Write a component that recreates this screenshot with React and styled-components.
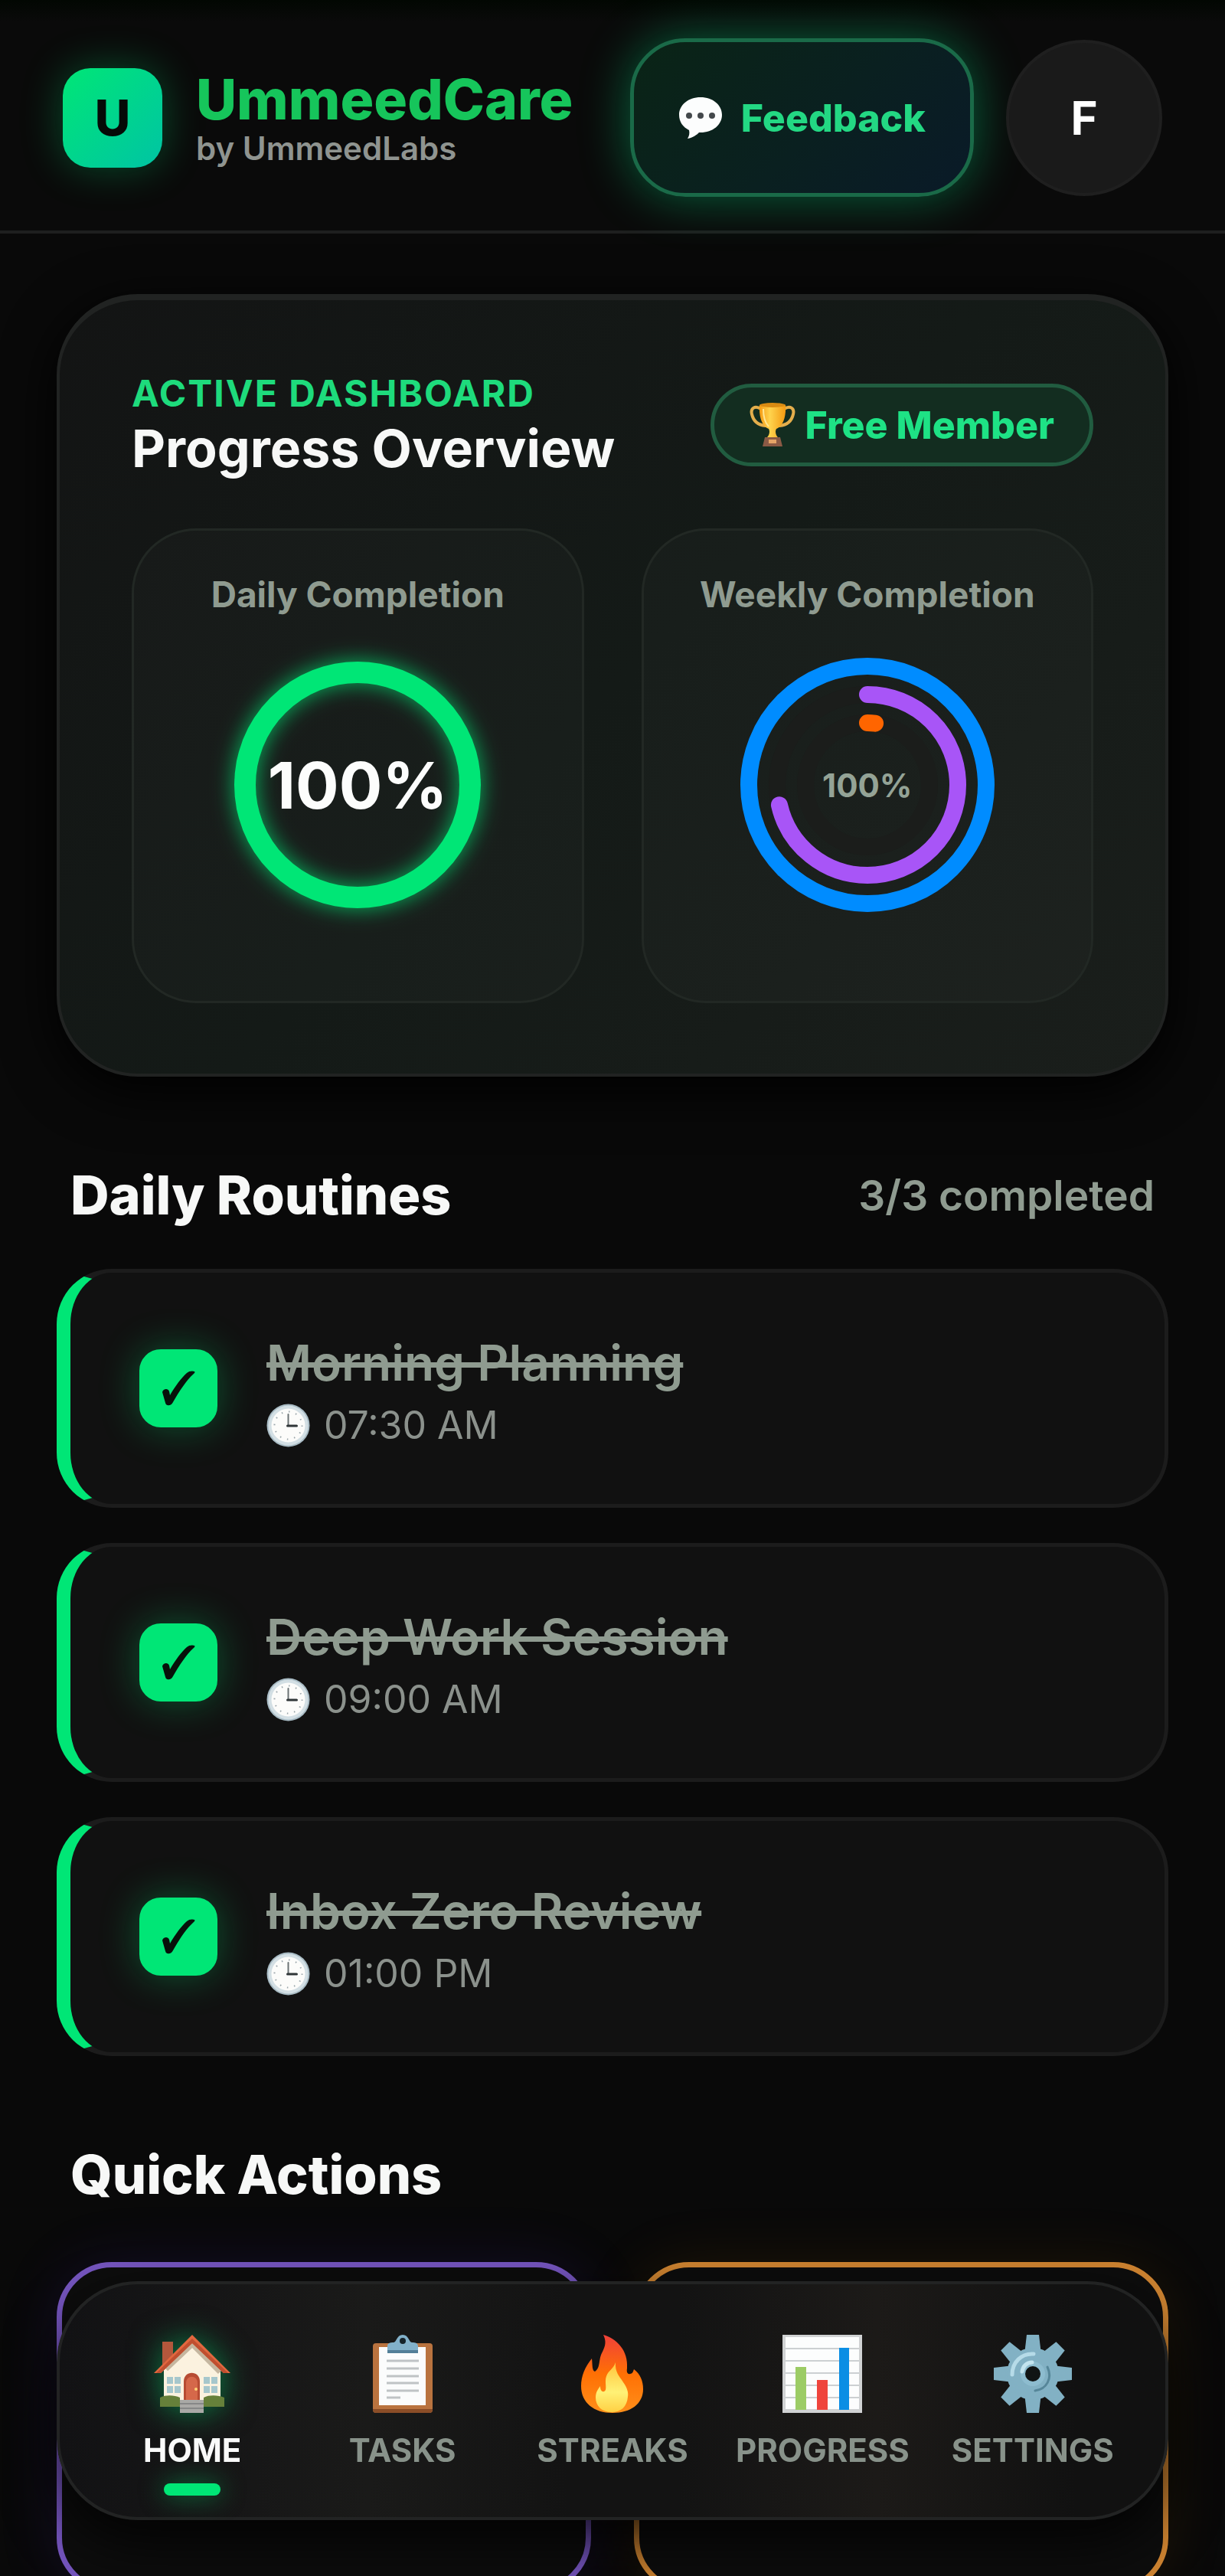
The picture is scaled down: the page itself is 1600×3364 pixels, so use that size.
import React, { useState } from "react";
import styled, { createGlobalStyle, css } from "styled-components";

const GlobalStyle = createGlobalStyle`
  *, *::before, *::after { box-sizing: border-box; }
  html, body { margin: 0; background: #090909; }
  body {
    font-family: Inter, "Liberation Sans", sans-serif;
    color: #f7f8f7;
    -webkit-font-smoothing: antialiased;
  }
  button, input { font: inherit; margin: 0; }
  h1, h2, h3, p, ul { margin: 0; padding: 0; }
  ul { list-style: none; }
`;

const green = "#00e676";
const muted = "#8f9b90";

const Shell = styled.div`
  display: flex;
  flex-direction: column;
  height: 100vh;
  overflow: hidden;
  background: #090909;
`;

/* ---------- header ---------- */

const Header = styled.header`
  display: flex;
  flex: none;
  align-items: center;
  justify-content: space-between;
  padding: 50px 82px 44px;
  border-bottom: 4px solid #1e1f1f;
  background: linear-gradient(#020702 0, #0a0a0a 28px);
`;

const Group = styled.div`
  display: flex;
  align-items: center;
  gap: ${(p) => p.$gap}px;
`;

const Logo = styled.div`
  display: grid;
  place-items: center;
  width: 130px;
  height: 130px;
  border-radius: 36px;
  background: linear-gradient(135deg, #00e676, #00c4a4);
  box-shadow: 0 0 54px rgba(0, 230, 118, 0.3);
  color: #050a07;
  font-size: 64px;
  font-weight: 800;
`;

const BrandName = styled.h1`
  font-size: 73px;
  line-height: 80px;
  font-weight: 800;
  color: #16c55b;
`;

const BrandBy = styled.p`
  font-size: 42px;
  line-height: 48px;
  font-weight: 600;
  color: #8f9490;
`;

const FeedbackButton = styled.button`
  display: flex;
  align-items: center;
  gap: 24px;
  min-height: 207px;
  padding: 0 58px;
  border: 5px solid #1a6a48;
  border-radius: 72px;
  background: linear-gradient(135deg, #0a2416, #0a2020 55%, #0a1a28);
  box-shadow: 0 0 64px rgba(0, 230, 138, 0.4);
  color: #23d883;
  font-size: 50px;
  font-weight: 800;
`;

const Avatar = styled.button`
  width: 204px;
  height: 204px;
  padding: 0;
  border: 4px solid #1f1f1f;
  border-radius: 50%;
  background: #1a1a1a;
  color: #fff;
  font-size: 60px;
  font-weight: 700;
`;

/* ---------- overview card ---------- */

const Main = styled.main`
  flex: 1;
  min-height: 0;
  padding: 79px 74px 0;
  overflow: hidden;
`;

const Overview = styled.section`
  padding: 92px 94px;
  border: 4px solid #212322;
  border-top-width: 8px;
  border-radius: 106px;
  background: linear-gradient(135deg, #131414, #141a17 50%, #1a1e1b);
  box-shadow: 0 18px 70px #000;
`;

const OverviewHead = styled.div`
  display: flex;
  align-items: center;
  justify-content: space-between;
  margin-bottom: 64px;
`;

const Eyebrow = styled.p`
  font-size: 48px;
  line-height: 60px;
  font-weight: 700;
  letter-spacing: 2px;
  color: #1edb7c;
`;

const Title = styled.h2`
  font-size: ${(p) => (p.$compact ? 68 : 70)}px;
  line-height: ${(p) => (p.$compact ? 82 : 90)}px;
  font-weight: ${(p) => (p.$compact ? 700 : 800)};
`;

const Badge = styled.span`
  display: flex;
  align-items: center;
  gap: 12px;
  height: 108px;
  padding: 0 46px;
  border: 5px solid #215c40;
  border-radius: 54px;
  background: #132d20;
  color: #1ee285;
  font-size: 50px;
  font-weight: 800;
`;

const Panels = styled.div`
  display: grid;
  grid-template-columns: 1fr 1fr;
  gap: 75px;
`;

const Panel = styled.article`
  display: flex;
  flex-direction: column;
  align-items: center;
  gap: 43px;
  padding: 55px 0 104px;
  border: 3px solid #222824;
  border-radius: 84px;
  background: rgba(255, 255, 255, 0.02);
`;

const PanelLabel = styled.h3`
  font-size: 46px;
  line-height: 56px;
  font-weight: 700;
  color: ${muted};
`;

const RingBox = styled.div`
  display: grid;
  place-items: center;
  > * { grid-area: 1 / 1; }
  svg { overflow: visible; }
`;

const RingValue = styled.span`
  font-size: ${(p) => (p.$big ? 84 : 42)}px;
  font-weight: 700;
  color: ${(p) => (p.$big ? "#fcfdfc" : "#94a396")};
`;

/* ---------- sections ---------- */

const SectionHead = styled.div`
  display: flex;
  align-items: center;
  justify-content: space-between;
  margin: 110px 18px ${(p) => p.$below}px;
`;

const Count = styled.span`
  font-size: 55px;
  line-height: 68px;
  font-weight: 600;
  color: ${muted};
`;

const RoutineList = styled.ul`
  display: flex;
  flex-direction: column;
  gap: 46px;
`;

const Routine = styled.li`
  display: flex;
  align-items: center;
  gap: 64px;
  min-height: 312px;
  padding: 0 90px;
  border: 5px solid #1c1c1c;
  border-left: 18px solid ${green};
  border-radius: 72px;
  background: #111;
`;

const CheckBox = styled.span`
  display: grid;
  place-items: center;
  > * { grid-area: 1 / 1; }
  svg { pointer-events: none; }
`;

const CheckInput = styled.input`
  appearance: none;
  width: 102px;
  height: 102px;
  border: 4px solid ${green};
  border-radius: 28px;
  &:checked {
    background: ${green};
    box-shadow: 0 0 52px rgba(0, 230, 118, 0.32);
  }
`;

const RoutineName = styled.label`
  display: block;
  font-size: 64px;
  line-height: 96px;
  font-weight: 600;
  color: ${muted};
  text-decoration: ${(p) => (p.$done ? "line-through" : "none")};
  text-decoration-thickness: 7px;
`;

const RoutineTime = styled.p`
  display: flex;
  align-items: center;
  gap: 18px;
  font-size: 50px;
  line-height: 66px;
  color: #8b918c;
`;

const ActionGrid = styled.div`
  display: grid;
  grid-template-columns: 1fr 1fr;
  gap: 56px;
`;

const ActionCard = styled.div`
  min-height: 432px;
  border: 7px solid ${(p) => p.$edge};
  border-radius: 72px;
  background: #0d0d0d;
  box-shadow: 0 0 80px ${(p) => p.$glow};
`;

/* ---------- bottom navigation ---------- */

const Nav = styled.nav`
  position: fixed;
  left: 74px;
  right: 74px;
  bottom: 73px;
  display: grid;
  grid-template-columns: repeat(5, 1fr);
  padding: 66px 36px 28px;
  border: 4px solid #222323;
  border-radius: 106px;
  background: linear-gradient(90deg, #121214, #1a1a19 28%, #131313 46%, #131313 56%, #1c1a18 74%, #111 92%);
  box-shadow: 0 30px 70px rgba(0, 0, 0, 0.8);
`;

const NavItem = styled.a`
  display: flex;
  flex-direction: column;
  align-items: center;
  font-size: 42px;
  line-height: 50px;
  font-weight: 700;
  color: #88928a;
  text-decoration: none;
  svg { display: block; margin-bottom: 24px; overflow: visible; }
  &::after {
    content: "";
    width: 74px;
    height: 16px;
    margin-top: 18px;
    border-radius: 8px;
  }
  ${(p) =>
    p.$active &&
    css`
      color: #fafafa;
      svg { filter: drop-shadow(0 0 20px rgba(0, 230, 118, 0.5)); }
      &::after {
        background: ${green};
        box-shadow: 0 0 32px rgba(0, 230, 118, 0.5);
      }
    `}
`;

/* ---------- drawings ---------- */

const Bubble = () => (
  <svg width="58" height="56" viewBox="0 0 58 56" aria-hidden="true">
    <path d="M29 1C13 1 1 11 1 24c0 9 5 16 13 20 1 4 0 8-2 11 7-1 12-5 15-8h2c16 0 28-10 28-23S45 1 29 1Z" fill="#fcfdfd" />
    <circle cx="14" cy="25" r="4" fill="#43484b" />
    <circle cx="29" cy="25" r="4" fill="#43484b" />
    <circle cx="44" cy="25" r="4" fill="#43484b" />
  </svg>
);

const Trophy = () => (
  <svg width="60" height="60" viewBox="0 0 60 60" aria-hidden="true">
    <defs>
      <linearGradient id="cup" x1="0" x2="1">
        <stop offset="0" stopColor="#f59a13" />
        <stop offset=".4" stopColor="#ffd34d" />
        <stop offset="1" stopColor="#f39a12" />
      </linearGradient>
    </defs>
    <path d="M15 9C7 4 1 8 3 16c2 9 8 14 18 15M45 9c8-5 14-1 12 7-2 9-8 14-18 15" fill="none" stroke="#e4ae4c" strokeWidth="4" strokeLinecap="round" />
    <path d="M13 4h34c1 17-4 28-12 31-2 3-1 9 3 12H22c4-3 5-9 3-12C17 32 12 21 13 4Z" fill="url(#cup)" />
    <ellipse cx="30" cy="4" rx="17" ry="3" fill="#d98b12" />
    <path d="M18 9c0 10 3 19 7 23" fill="none" stroke="#ffe793" strokeWidth="2" />
    <path d="M20 46h20l3 12H17Z" fill="#8b5a45" />
    <path d="M25 49h10v5H25Z" fill="#e5a467" />
  </svg>
);

const Clock = () => (
  <svg width="57" height="57" viewBox="0 0 57 57" aria-hidden="true">
    <circle cx="28.5" cy="28.5" r="28" fill="#a9bcc5" />
    <circle cx="28.5" cy="28.5" r="26" fill="#d3dfe4" />
    <circle cx="28.5" cy="28.5" r="22" fill="#fcfcfa" />
    <circle cx="28.5" cy="28.5" r="18" fill="none" stroke="#9aa5aa" strokeWidth="2" strokeDasharray="1.5 7.925" />
    <path d="M28.5 14v15" fill="none" stroke="#6b7274" strokeWidth="2" strokeLinecap="round" />
    <path d="M27.5 29h12" fill="none" stroke="#303638" strokeWidth="3" strokeLinecap="round" />
  </svg>
);

const Check = () => (
  <svg width="44" height="46" viewBox="0 0 44 46" aria-hidden="true">
    <path d="M1 28c1-4 7-6 9-1l1 5C18 20 26 9 33 3c3-3 8-3 10-2 1 1 0 2-1 3C32 13 23 27 15 41c-2 5-9 6-10 1Z" fill="#07110a" />
  </svg>
);

const House = () => (
  <svg width="102" height="102" viewBox="0 0 102 102" aria-hidden="true">
    <path d="M12 9h14v34H12Z" fill="#b4573c" />
    <path d="M14 46 51 9l37 40v40H14Z" fill="#fbf2df" />
    <path d="M17 45 51 13l36 36" fill="none" stroke="#c5b69f" strokeWidth="6" />
    <path d="M51 0 1 50h9l41-39 41 39h9L51 0Z" fill="#e2673f" />
    <path d="M51 11 10 50H4L51 5l47 45h-6Z" fill="#bf4f30" />
    <path d="M40 88V61c0-15 21-15 21 0v27Z" fill="#b74c33" />
    <path d="M43 86V63c0-11 15-11 15 0v23Z" fill="#d5684a" />
    <circle cx="56" cy="71" r="2" fill="#ffd273" />
    <g fill="#a6c7cc">
      <path d="M18 55h8v9h-8ZM28 55h8v9h-8ZM18 67h8v9h-8ZM28 67h8v9h-8ZM66 55h8v9h-8ZM76 55h8v9h-8ZM66 67h8v9h-8ZM76 67h8v9h-8Z" />
    </g>
    <path d="M9 82c8-4 19-3 26 0v12H9ZM66 82c8-4 19-3 27 0v12H66Z" fill="#66803a" />
    <path d="M35 85h31v17H35Z" fill="#aaa9a6" />
    <path d="M35 90h31M35 96h31" stroke="#878888" strokeWidth="2" />
  </svg>
);

const Clipboard = () => (
  <svg width="102" height="102" viewBox="0 0 102 102" aria-hidden="true">
    <rect x="12" y="11" width="78" height="91" rx="4" fill="#b9733f" />
    <path d="M12 97h78v1c0 2-2 4-4 4H16c-2 0-4-2-4-4Z" fill="#8b4d27" />
    <path d="M20 16h61v76H20Z" fill="#fbfcfc" />
    <path d="M30 34h42M30 44h42M30 54h42M30 63h42M30 73h42M30 82h18" stroke="#bfc3c5" strokeWidth="3" />
    <path d="M31 24V15c0-4 3-5 8-5 4 0 4-10 12-10s8 10 12 10c5 0 8 1 8 5v9Z" fill="#82b1ca" />
    <path d="M31 20h40v4H31Z" fill="#537f98" />
    <circle cx="51" cy="8" r="4" fill="#15232a" />
  </svg>
);

const Flame = () => (
  <svg width="102" height="102" viewBox="0 0 102 102" aria-hidden="true">
    <defs>
      <linearGradient id="flameOuter" x1="0" x2="0" y1="0" y2="1">
        <stop offset="0" stopColor="#f0403a" />
        <stop offset=".5" stopColor="#ff7004" />
        <stop offset="1" stopColor="#ff8f1a" />
      </linearGradient>
      <linearGradient id="flameInner" x1="0" x2="0" y1="0" y2="1">
        <stop offset="0" stopColor="#ffc33a" />
        <stop offset=".6" stopColor="#fff176" />
        <stop offset="1" stopColor="#ffd044" />
      </linearGradient>
    </defs>
    <path d="M39 0c17 5 33 20 31 44-1 5 1 8 4 7 3 0 4-3 5-6 8 6 12 15 12 26 0 19-16 31-40 31S10 89 10 67c0-13 5-25 14-36 1 8 0 16 4 17 8-5 4-16 10-26 4-8 5-14 1-22Z" fill="url(#flameOuter)" />
    <path d="M55 36c-1 13 5 18 10 26 5 7 7 13 6 19-1 13-9 20-21 20-13 0-21-8-21-19 0-8 4-12 6-15 0 5 2 8 5 7 5-2 0-12 3-20 3-8 9-9 12-18Z" fill="url(#flameInner)" />
  </svg>
);

const Chart = () => (
  <svg width="104" height="102" viewBox="0 0 104 102" aria-hidden="true">
    <path d="M0 0h104v102H0Z" fill="#d0d2d3" />
    <path d="M4 3h96v94H4Z" fill="#fcfdfd" />
    <path d="M4 18h96M4 34h96M4 50h96M4 66h96M4 82h96" stroke="#ccd0d2" strokeWidth="2" />
    <path d="M17 42h14v56H17Z" fill="#9ccc65" />
    <path d="M45 59h14v39H45Z" fill="#ef443c" />
    <path d="M74 17h13v81H74Z" fill="#0b8ee4" />
  </svg>
);

const Gear = () => (
  <svg width="102" height="102" viewBox="0 0 102 102" aria-hidden="true">
    <g fill="#82b1c4">
      {[0, 45, 90, 135].map((angle) => (
        <path key={angle} d="M43 0h16l3 26v50l-3 26H43l-3-26V26Z" transform={`rotate(${angle} 51 51)`} />
      ))}
      <circle cx="51" cy="51" r="34" />
    </g>
    <path d="M24 52c0-16 12-28 28-27" fill="none" stroke="#b6dbe8" strokeWidth="5" strokeLinecap="round" />
    <path d="M70 42c7 15-1 29-16 31" fill="none" stroke="#568699" strokeWidth="3" strokeLinecap="round" />
    <circle cx="51" cy="51" r="16" fill="#8dbccf" />
    <path d="M37 48c1-7 6-12 13-12" fill="none" stroke="#c3e4ef" strokeWidth="5" strokeLinecap="round" />
    <circle cx="51" cy="51" r="10" fill="#101414" />
  </svg>
);

const Arc = ({ r, width, color, part, glow }) => (
  <circle
    cx="178"
    cy="178"
    r={r}
    fill="none"
    stroke={color}
    strokeWidth={width}
    strokeLinecap="round"
    pathLength="1"
    strokeDasharray={part < 1 ? `${part} 1` : undefined}
    transform="rotate(-90 178 178)"
    style={glow ? { filter: `drop-shadow(0 0 14px ${glow})` } : undefined}
  />
);

const DailyRing = () => (
  <RingBox>
    <svg width="356" height="356" viewBox="0 0 356 356" aria-hidden="true">
      <Arc r={147} width={28} color={green} part={1} glow="rgba(0,230,118,.75)" />
    </svg>
    <RingValue $big>100%</RingValue>
  </RingBox>
);

const weekly = [
  { r: 155, color: "#008cff", part: 1 },
  { r: 118, color: "#a855f7", part: 5 / 7 },
  { r: 81, color: "#ff6500", part: 0.02 },
];

const WeeklyRing = () => (
  <RingBox>
    <svg width="356" height="356" viewBox="0 0 356 356" aria-hidden="true">
      {weekly.map((ring) => (
        <React.Fragment key={ring.r}>
          <Arc r={ring.r} width={22} color="#1b1d1b" part={1} />
          <Arc r={ring.r} width={22} color={ring.color} part={ring.part} />
        </React.Fragment>
      ))}
    </svg>
    <RingValue>100%</RingValue>
  </RingBox>
);

/* ---------- data ---------- */

const initialRoutines = [
  { id: "morning", name: "Morning Planning", time: "07:30 AM", done: true },
  { id: "deep", name: "Deep Work Session", time: "09:00 AM", done: true },
  { id: "inbox", name: "Inbox Zero Review", time: "01:00 PM", done: true },
];

const tabs = [
  { id: "home", label: "HOME", Icon: House },
  { id: "tasks", label: "TASKS", Icon: Clipboard },
  { id: "streaks", label: "STREAKS", Icon: Flame },
  { id: "progress", label: "PROGRESS", Icon: Chart },
  { id: "settings", label: "SETTINGS", Icon: Gear },
];

export default function App() {
  const [routines, setRoutines] = useState(initialRoutines);
  const doneCount = routines.filter((r) => r.done).length;
  const toggle = (id) =>
    setRoutines((list) => list.map((r) => (r.id === id ? { ...r, done: !r.done } : r)));

  return (
    <Shell>
      <GlobalStyle />
      <Header>
        <Group $gap={44}>
          <Logo>U</Logo>
          <div>
            <BrandName>UmmeedCare</BrandName>
            <BrandBy>by UmmeedLabs</BrandBy>
          </div>
        </Group>
        <Group $gap={42}>
          <FeedbackButton type="button">
            <Bubble />
            Feedback
          </FeedbackButton>
          <Avatar type="button">F</Avatar>
        </Group>
      </Header>

      <Main>
        <Overview>
          <OverviewHead>
            <div>
              <Eyebrow>ACTIVE DASHBOARD</Eyebrow>
              <Title $compact>Progress Overview</Title>
            </div>
            <Badge>
              <Trophy />
              Free Member
            </Badge>
          </OverviewHead>
          <Panels>
            <Panel>
              <PanelLabel>Daily Completion</PanelLabel>
              <DailyRing />
            </Panel>
            <Panel>
              <PanelLabel>Weekly Completion</PanelLabel>
              <WeeklyRing />
            </Panel>
          </Panels>
        </Overview>

        <section>
          <SectionHead $below={51}>
            <Title>Daily Routines</Title>
            <Count>{`${doneCount}/${routines.length} completed`}</Count>
          </SectionHead>
          <RoutineList>
            {routines.map((r) => (
              <Routine key={r.id}>
                <CheckBox>
                  <CheckInput type="checkbox" id={r.id} checked={r.done} onChange={() => toggle(r.id)} />
                  {r.done && <Check />}
                </CheckBox>
                <div>
                  <RoutineName htmlFor={r.id} $done={r.done}>{r.name}</RoutineName>
                  <RoutineTime>
                    <Clock />
                    {r.time}
                  </RoutineTime>
                </div>
              </Routine>
            ))}
          </RoutineList>
        </section>

        <section>
          <SectionHead $below={69}>
            <Title>Quick Actions</Title>
          </SectionHead>
          <ActionGrid>
            <ActionCard $edge="#7656c0" $glow="rgba(90, 50, 220, 0.14)" />
            <ActionCard $edge="#cf8431" $glow="rgba(200, 120, 0, 0.12)" />
          </ActionGrid>
        </section>
      </Main>

      <Nav aria-label="Main">
        {tabs.map(({ id, label, Icon }) => (
          <NavItem key={id} href={`#${id}`} $active={id === "home"}>
            <Icon />
            {label}
          </NavItem>
        ))}
      </Nav>
    </Shell>
  );
}
